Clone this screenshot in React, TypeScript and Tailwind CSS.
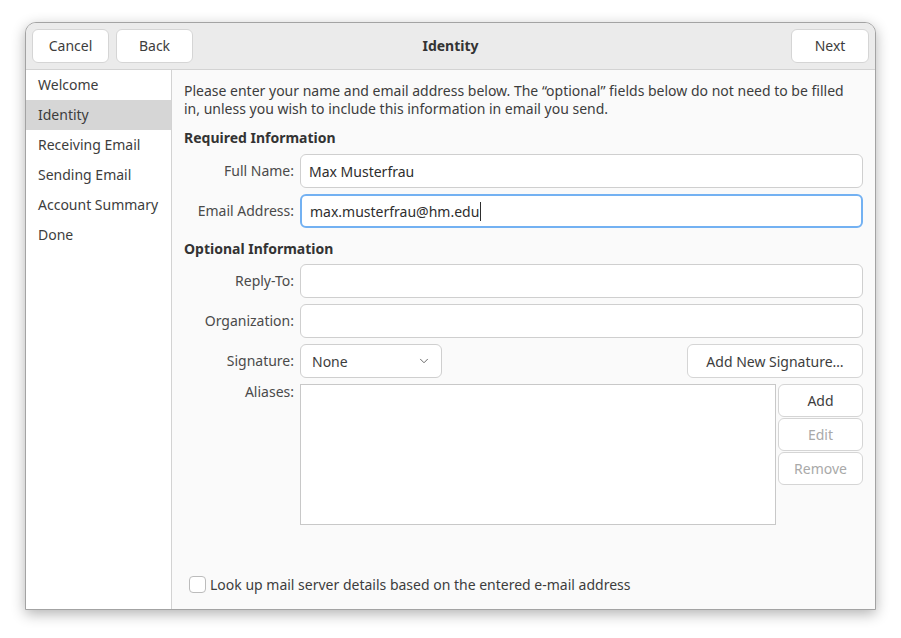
import { ChevronDown } from 'lucide-react';

const font = { fontFamily: '"Noto Sans", "Open Sans", sans-serif' };

const steps = ['Welcome', 'Identity', 'Receiving Email', 'Sending Email', 'Account Summary', 'Done'];

function HeaderButton({ label, className = '' }: { label: string; className?: string }) {
  return (
    <button
      className={`h-[34px] rounded-[6px] border border-[#d5d5d5] bg-white pb-[2px] text-[14px] text-[#3d3d3d] ${className}`}
    >
      {label}
    </button>
  );
}

function Field({ value = '', focused = false }: { value?: string; focused?: boolean }) {
  return (
    <div
      className={`flex h-[34px] items-center rounded-[6px] bg-white px-[8px] text-[14px] text-[#2e2e2e] ${
        focused ? 'border-2 border-[#73b1f2] px-[7px]' : 'border border-[#cfcfcf]'
      }`}
    >
      {value}
      {focused && <span className="ml-[1px] h-[19px] w-[1px] bg-[#2e2e2e]" />}
    </div>
  );
}

function SideButton({ label, disabled = false }: { label: string; disabled?: boolean }) {
  return (
    <button
      className={`h-[33px] w-full rounded-[6px] border border-[#d5d5d5] bg-white text-[14px] ${
        disabled ? 'text-[#a9a9a9]' : 'text-[#3d3d3d]'
      }`}
    >
      {label}
    </button>
  );
}

export default function App() {
  return (
    <div className="h-[638px] w-[901px] bg-white pl-[25px] pt-[22px]" style={font}>
      <div className="flex h-[588px] w-[851px] flex-col overflow-hidden rounded-t-[11px] border border-[#a3a3a3] bg-[#fafafa] shadow-[0_4px_14px_rgba(0,0,0,0.3)]">
        {/* header bar */}
        <div className="grid h-[47px] shrink-0 grid-cols-[1fr_auto_1fr] items-center border-b border-[#d3d3d3] bg-[#ebebeb] px-[6px]">
          <div className="flex gap-[7px]">
            <HeaderButton label="Cancel" className="w-[77px]" />
            <HeaderButton label="Back" className="w-[77px]" />
          </div>
          <div className="pb-[2px] text-center text-[14px] font-bold text-[#333]">Identity</div>
          <div className="flex justify-end">
            <HeaderButton label="Next" className="w-[78px]" />
          </div>
        </div>

        <div className="flex min-h-0 flex-1">
          {/* step list */}
          <div className="w-[146px] shrink-0 border-r border-[#d3d3d3] bg-white">
            {steps.map((s) => (
              <div
                key={s}
                className={`flex h-[30px] items-center pb-[2px] pl-[12px] text-[14px] text-[#3d3d3d] ${
                  s === 'Identity' ? 'bg-[#d6d6d6]' : ''
                }`}
              >
                {s}
              </div>
            ))}
          </div>

          {/* form */}
          <div className="flex flex-1 flex-col pl-[12px] pr-[12px] pt-[12px] text-[#3d3d3d]">
            <p className="text-[14px] leading-[18px]">
              Please enter your name and email address below. The “optional” fields below do not need to be filled
              in, unless you wish to include this information in email you send.
            </p>

            <h2 className="mt-[10px] text-[14px] font-bold leading-[20px] text-[#333]">Required Information</h2>
            <div className="mt-[6px] grid grid-cols-[110px_1fr] items-center gap-x-[6px] gap-y-[6px] text-[14px]">
              <span className="pb-[2px] text-right text-[#4a4a4a]">Full Name:</span>
              <Field value="Max Musterfrau" />
              <span className="pb-[2px] text-right text-[#4a4a4a]">Email Address:</span>
              <Field value="max.musterfrau@hm.edu" focused />
            </div>

            <h2 className="mt-[10px] pt-[1px] text-[14px] font-bold leading-[19px] text-[#333]">Optional Information</h2>
            <div className="mt-[6px] grid grid-cols-[110px_1fr] items-center gap-x-[6px] gap-y-[6px] text-[14px]">
              <span className="pb-[2px] text-right text-[#4a4a4a]">Reply-To:</span>
              <Field />
              <span className="pb-[2px] text-right text-[#4a4a4a]">Organization:</span>
              <Field />
              <span className="pb-[2px] text-right text-[#4a4a4a]">Signature:</span>
              <div className="flex items-center justify-between">
                <div className="flex h-[34px] w-[142px] items-center justify-between rounded-[6px] border border-[#cfcfcf] bg-white pl-[11px] pr-[10px] text-[#3d3d3d]">
                  None
                  <ChevronDown size={14} strokeWidth={1.5} className="text-[#555]" />
                </div>
                <button className="h-[34px] w-[176px] rounded-[6px] border border-[#d5d5d5] bg-white text-[14px] text-[#3d3d3d]">
                  Add New Signature…
                </button>
              </div>
              <span className="self-start text-right leading-[16px] text-[#4a4a4a]">Aliases:</span>
              <div className="flex gap-[2px]">
                <div className="h-[141px] flex-1 border border-[#c8c8c8] bg-white" />
                <div className="flex w-[85px] flex-col gap-[1px]">
                  <SideButton label="Add" />
                  <SideButton label="Edit" disabled />
                  <SideButton label="Remove" disabled />
                </div>
              </div>
            </div>

            <label className="mt-auto mb-[14px] flex items-center gap-[4px] pl-[5px] text-[14px] text-[#3d3d3d]">
              <span className="h-[17px] w-[17px] rounded-[4px] border border-[#bcbcbc] bg-white" />
              Look up mail server details based on the entered e-mail address
            </label>
          </div>
        </div>
      </div>
    </div>
  );
}
